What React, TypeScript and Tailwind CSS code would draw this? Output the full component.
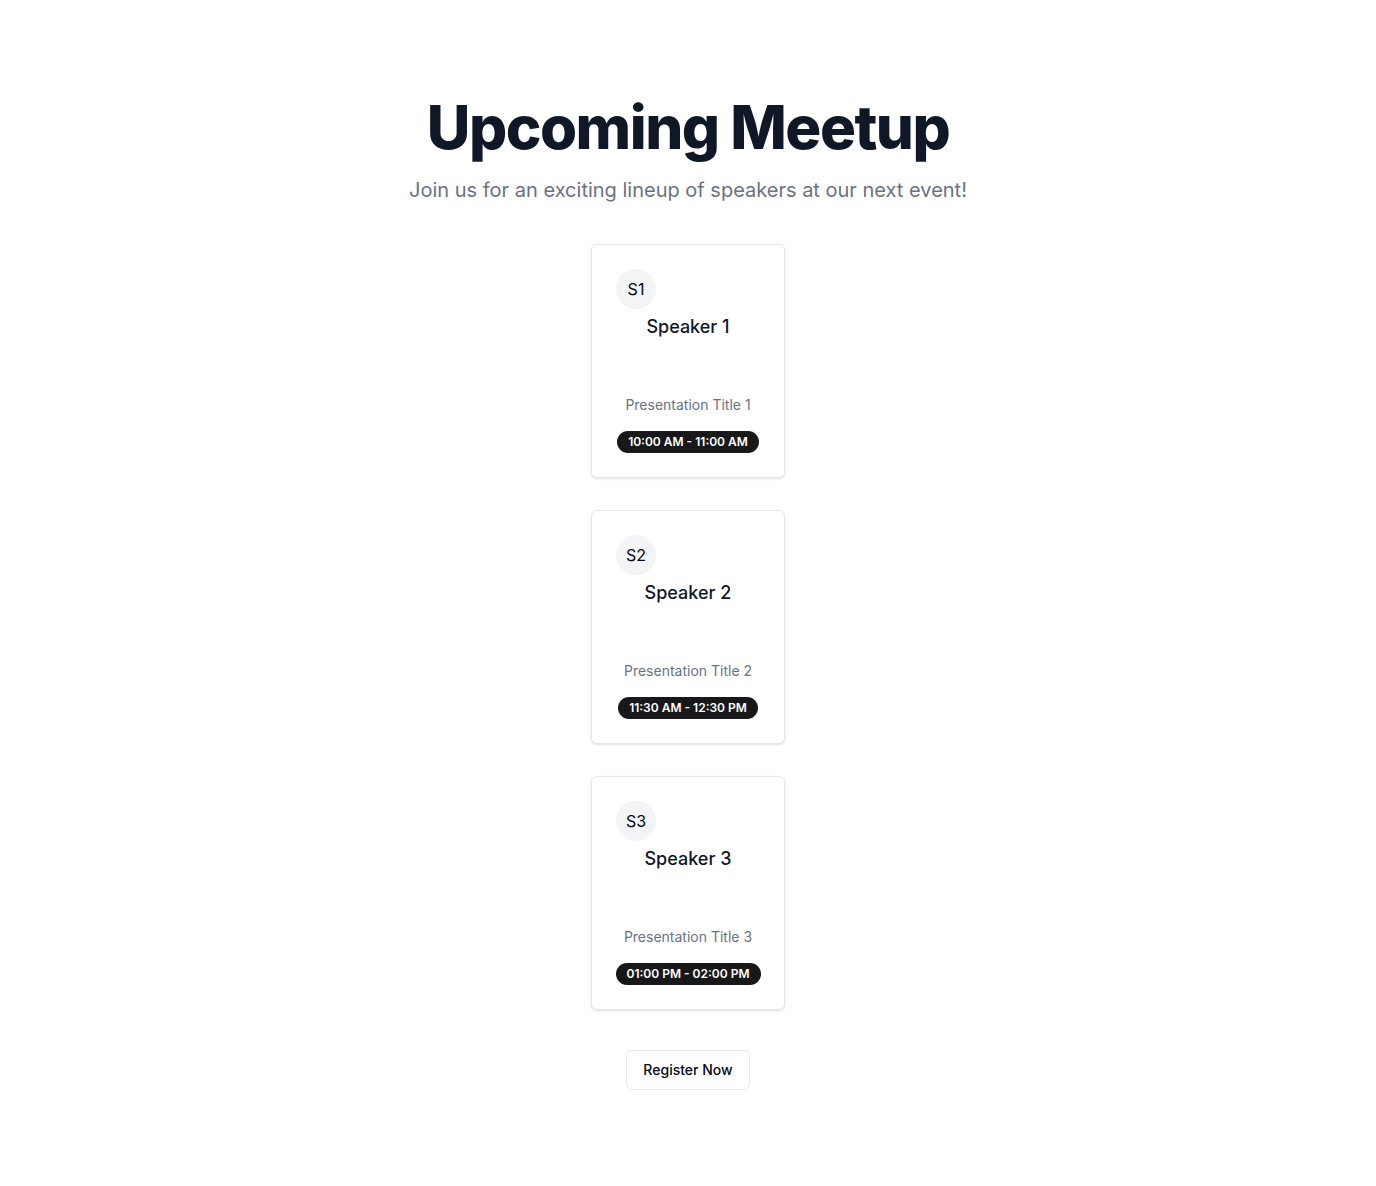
const speakers = [
  { id: 1, initials: "S1", name: "Speaker 1", title: "Presentation Title 1", time: "10:00 AM - 11:00 AM" },
  { id: 2, initials: "S2", name: "Speaker 2", title: "Presentation Title 2", time: "11:30 AM - 12:30 PM" },
  { id: 3, initials: "S3", name: "Speaker 3", title: "Presentation Title 3", time: "01:00 PM - 02:00 PM" },
];

export default function App() {
  return (
    <div className="min-h-screen bg-white font-['Inter',sans-serif]">
      <section className="flex flex-col items-center pt-[97px] pb-24">
        {/* Header */}
        <h1 className="text-6xl leading-none font-extrabold tracking-tight text-gray-900">
          Upcoming Meetup
        </h1>
        <p className="mt-[19px] text-xl text-gray-500">
          Join us for an exciting lineup of speakers at our next event!
        </p>

        {/* Speaker cards */}
        <div className="mt-10 flex flex-col items-center gap-8">
          {speakers.map((s) => (
            <div
              key={s.id}
              className="w-[194px] rounded-md border border-gray-200 bg-white p-6 shadow-sm"
            >
              <div className="flex h-10 w-10 items-center justify-center rounded-full bg-gray-100 text-base text-gray-950">
                {s.initials}
              </div>
              <h3 className="mt-1 text-center text-lg leading-7 font-medium text-gray-900">
                {s.name}
              </h3>
              <p className="mt-[54px] text-center text-sm text-gray-500">{s.title}</p>
              <div className="mt-4 flex justify-center">
                <span className="rounded-full border border-transparent bg-[#18181b] px-2.5 py-0.5 text-xs font-semibold whitespace-nowrap text-white">
                  {s.time}
                </span>
              </div>
            </div>
          ))}
        </div>

        <button className="mt-10 h-10 rounded-md border border-gray-200 bg-white px-4 text-sm font-medium text-gray-950">
          Register Now
        </button>
      </section>
    </div>
  );
}
